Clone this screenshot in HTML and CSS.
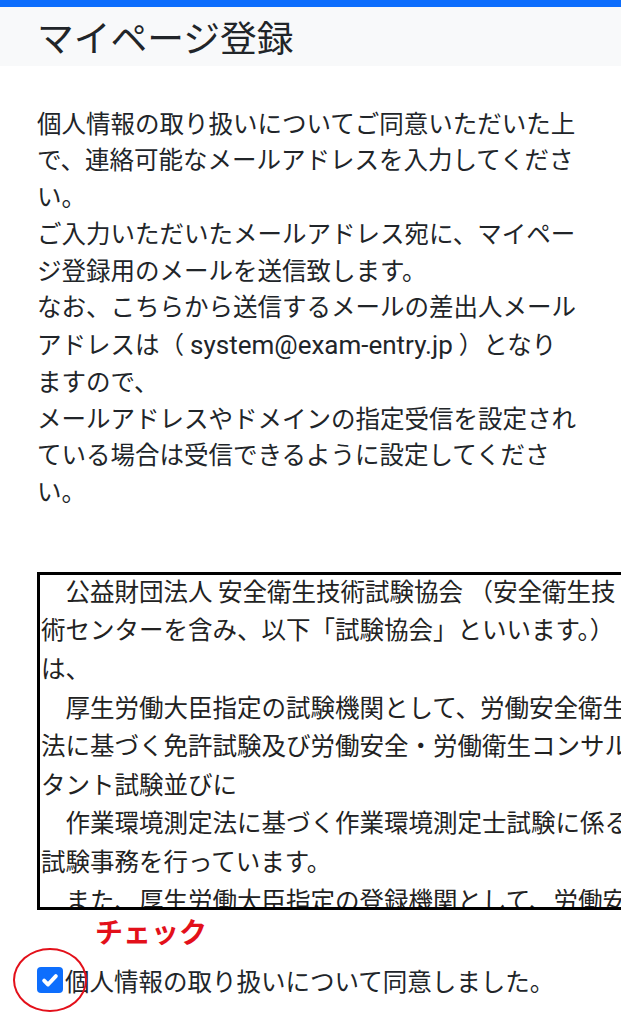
FILE: index.html
```html
<!DOCTYPE html>
<html lang="ja">
<head>
<meta charset="utf-8">
<title>マイページ登録</title>
<link rel="stylesheet" href="styles.css">
</head>
<body>
<div class="page">
  <div class="topbar"></div>
  <header class="header">
    <h1 class="title">マイページ登録</h1>
  </header>
  <main class="main">
    <p class="intro">個人情報の取り扱いについてご同意いただいた上で、連絡可能なメールアドレスを入力してください。<br>ご入力いただいたメールアドレス宛に、マイページ登録用のメールを送信致します。<br>なお、こちらから送信するメールの差出人メールアドレスは（ <span class="mail">system@exam-entry.jp</span> ）となりますので、<br>メールアドレスやドメインの指定受信を設定されている場合は受信できるように設定してください。</p>
    <div class="terms">
      <div class="terms-body">
        <p class="terms-p">　公益財団法人 安全衛生技術試験協会 （安全衛生技術センターを含み、以下「試験協会」といいます。）は、</p>
        <p class="terms-p">　厚生労働大臣指定の試験機関として、労働安全衛生法に基づく免許試験及び労働安全・労働衛生コンサルタント試験並びに</p>
        <p class="terms-p">　作業環境測定法に基づく作業環境測定士試験に係る試験事務を行っています。</p>
        <p class="terms-p">　また、厚生労働大臣指定の登録機関として、労働安全衛生法に基づく登録事務を行っています。</p>
      </div>
    </div>
    <div class="note">チェック</div>
    <label class="agree">
      <span class="checkbox">
        <svg viewBox="0 0 20 20" width="26" height="26"><path d="M5.5 10.5l3 3l6-6.5" fill="none" stroke="#fff" stroke-width="3" stroke-linecap="round" stroke-linejoin="round"/></svg>
        <span class="ring"></span>
      </span>
      <span class="agree-text">個人情報の取り扱いについて同意しました。</span>
    </label>
  </main>
</div>
</body>
</html>
```
FILE: styles.css
```css
html, body {
  margin: 0;
  padding: 0;
  background: #fff;
}
body {
  overflow-x: hidden;
  font-family: Roboto, "Noto Sans CJK JP", sans-serif;
  color: #212529;
}
.page {
  width: 621px;
  overflow: hidden;
}
.topbar {
  height: 7px;
  background: #0d6efd;
}
.header {
  height: 59px;
  background: #f8f9fa;
  display: flex;
  align-items: center;
  padding-left: 37px;
}
.title {
  margin: 0;
  font-size: 36.75px;
  font-weight: 400;
  line-height: 1.2;
  color: #212529;
  font-family: "Noto Sans CJK JP", sans-serif;
}
.main {
  padding: 0 44px 40px 37px;
}
.intro {
  margin: 40.6px 0 0;
  font-size: 24.5px;
  line-height: 36.75px;
}
.mail {
  font-size: 26px;
}
.terms {
  margin-top: 60px;
  box-sizing: border-box;
  width: 610px;
  height: 338px;
  border: 3px solid #000;
  padding: 0 0 0 1px;
  overflow: hidden;
  font-family: "Noto Sans CJK JP", sans-serif;
  font-size: 24.5px;
  line-height: 38.6px;
  color: #222;
}
.terms-body {
  margin-top: -3px;
}
.terms-p {
  margin: 0;
  width: 589px;
}
.note {
  margin-top: 5px;
  padding-left: 58px;
  font-family: "Noto Sans CJK JP", sans-serif;
  font-size: 28px;
  font-weight: 700;
  line-height: 32px;
  color: #e3101a;
}
.agree {
  margin-top: 15px;
  display: flex;
  align-items: center;
  height: 36.75px;
  font-size: 24.5px;
}
.checkbox {
  position: relative;
  width: 26px;
  height: 26px;
  flex: none;
  border-radius: 4px;
  background: #0d6efd;
  display: flex;
}
.ring {
  position: absolute;
  left: -24px;
  top: -19px;
  width: 74px;
  height: 64px;
  box-sizing: border-box;
  border: 2.5px solid #e3101a;
  border-radius: 50%;
}
.agree-text {
  margin-left: 2px;
  font-family: "Noto Sans CJK JP", sans-serif;
}
```
